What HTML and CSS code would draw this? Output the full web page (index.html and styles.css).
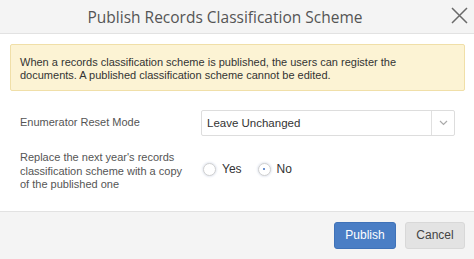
FILE: index.html
```html
<!DOCTYPE html>
<html>
<head>
<meta charset="utf-8">
<link rel="stylesheet" href="styles.css">
</head>
<body>
<div class="dialog">
  <div class="header">
    <div class="title">Publish Records Classification Scheme</div>
    <div class="close">
      <svg width="17" height="17" viewBox="0 0 17 17"><path d="M1 1L16 16M16 1L1 16" stroke="#6a6a6a" stroke-width="1.5" fill="none"/></svg>
    </div>
  </div>
  <div class="body">
    <div class="alert">When a records classification scheme is published, the users can register the documents. A published classification scheme cannot be edited.</div>
    <div class="row">
      <div class="label">Enumerator Reset Mode</div>
      <div class="select">
        <span class="value">Leave Unchanged</span>
        <span class="arrow"><svg width="9" height="6" viewBox="0 0 9 6"><path d="M1 1L4.5 4.5L8 1" stroke="#aaa" stroke-width="1.2" fill="none"/></svg></span>
      </div>
    </div>
    <div class="row row2">
      <div class="label">Replace the next year's records classification scheme with a copy of the published one</div>
      <div class="radios">
        <label class="radio"><span class="circle"></span>Yes</label>
        <label class="radio"><span class="circle checked"></span>No</label>
      </div>
    </div>
  </div>
  <div class="footer">
    <button class="btn primary">Publish</button>
    <button class="btn">Cancel</button>
  </div>
</div>
</body>
</html>
```
FILE: styles.css
```css
html, body { margin: 0; padding: 0; background: #fff; }
body { font-family: "Liberation Sans", Arial, sans-serif; font-size: 11px; color: #333; }
.dialog { width: 474px; height: 259px; display: flex; flex-direction: column; }
.header { height: 33px; background: #f4f4f4; border-bottom: 1px solid #e2e2e2; display: flex; align-items: center; justify-content: center; padding-right: 24px; position: relative; }
.title { font-family: "Open Sans", sans-serif; font-size: 15.5px; color: #555; padding-top: 1px; }
.close { position: absolute; right: 6px; top: 7px; width: 17px; height: 17px; }
.close svg { display: block; }
.body { flex: 1; padding: 10px 9px 0 10px; }
.alert { background: #fcf3d4; border: 1px solid #f0dfa8; border-radius: 2px; padding: 11px 9px 8px 9px; line-height: 13px; color: #333; }
.row { display: flex; align-items: center; padding-left: 10px; margin-top: 19px; }
.label { width: 172px; margin-right: 9px; color: #555; line-height: 13.5px; }
.select { width: 254px; height: 26px; border: 1px solid #ddd; border-radius: 2px; display: flex; align-items: center; box-sizing: border-box; }
.value { flex: 1; padding-left: 5px; color: #333; font-size: 11.5px; }
.arrow { width: 22px; height: 100%; border-left: 1px solid #e0e0e0; display: flex; align-items: center; justify-content: center; }
.row2 { margin-top: 15px; }
.radios { display: flex; align-items: center; margin-top: -4px; }
.radio { display: flex; align-items: center; margin-right: 14px; color: #333; font-size: 12px; }
.circle { width: 13px; height: 13px; border: 1px solid #d0d0d0; border-radius: 50%; margin-left: 2px; margin-right: 6px; box-sizing: border-box; background: #fff; box-shadow: 0 0 2px 1px #e6eaf2; position: relative; }
.circle.checked::after { content: ""; position: absolute; left: 4.5px; top: 4.5px; width: 2px; height: 2px; border-radius: 50%; background: #3a6bbf; }
.footer { height: 47px; background: #f4f4f4; border-top: 1px solid #e2e2e2; display: flex; align-items: center; justify-content: flex-end; padding-right: 9px; gap: 9px; }
.btn { font-family: "Liberation Sans", Arial, sans-serif; font-size: 12px; height: 27px; border-radius: 3px; padding: 0; background: #e3e3e3; color: #444; border: 1px solid #d8d8d8; margin-top: -1px; }
.btn.primary { background: #4a7ec5; color: #fff; border-color: #3f72b8; width: 62px; }
.btn:not(.primary) { width: 60px; }
```
